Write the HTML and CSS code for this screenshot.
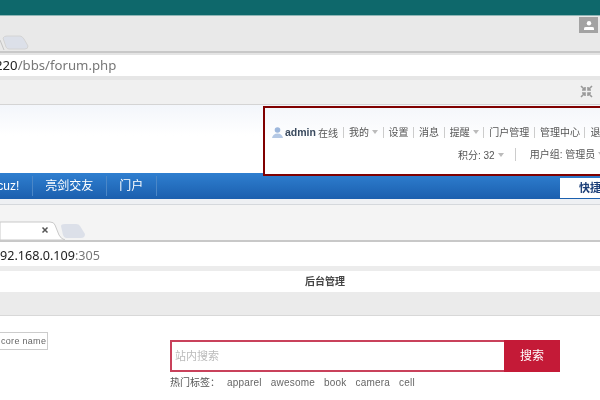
FILE: index.html
```html
<!DOCTYPE html>
<html lang="zh-CN">
<head>
  <meta charset="UTF-8">
  <title>后台管理</title>
  <link rel="stylesheet" href="styles.css">
</head>
<body>
  <div class="topbar"></div>

  <div class="tabstrip first">
    <svg class="newtab" width="30" height="16" viewBox="0 0 30 16">
      <path d="M0 5L4 15" stroke="#c4c4c4" fill="none"/>
      <path d="M3 3Q4 1 7 1H20Q22 1 24 4L28 11Q28 14 25 14H9Q7 14 6 12Z" fill="#dce0e9" stroke="#d4d4d4"/>
    </svg>
    <div class="user-btn">
      <svg width="10" height="9" viewBox="0 0 10 9"><circle cx="5" cy="2.2" r="2.2" fill="#fff"/><path d="M0 9V7.4Q0 6 2 6H8Q10 6 10 7.4V9Z" fill="#fff"/></svg>
    </div>
  </div>
  <div class="urlbar upper"><span class="host">220</span><span class="path">/bbs/forum.php</span></div>
  <div class="toolbar">
    <svg class="shrink" width="13" height="13" viewBox="0 0 13 13" fill="none" stroke="#9a9a9a" stroke-width="1.6">
      <path d="M1 1L5 5M5 2V5H2M12 1L8 5M8 2V5H11M1 12L5 8M5 11V8H2M12 12L8 8M8 11V8H11"/>
    </svg>
  </div>

  <div class="site-head">
    <div class="userbox">
      <div class="info-row">
        <svg class="avatar" width="11" height="11" viewBox="0 0 11 11"><circle cx="5.5" cy="3" r="2.8" fill="#9db7dc"/><path d="M0 11Q1 6.500 5.500 6.500T11 11Z" fill="#b4c8e4"/></svg>
        <b class="name">admin</b><span class="online">在线</span>
        <a>我的<i class="caret"></i></a>
        <a>设置</a>
        <a>消息</a>
        <a>提醒<i class="caret"></i></a>
        <a>门户管理</a>
        <a>管理中心</a>
        <a>退出</a>
      </div>
      <div class="info-row second">
        <span>积分: 32<i class="caret"></i></span>
        <span class="group">用户组: 管理员<i class="caret"></i></span>
      </div>
    </div>
  </div>

  <nav class="mainnav">
    <a class="clip">Discuz!</a>
    <a>亮剑交友</a>
    <a>门户</a>
    <div class="quick">快捷导航</div>
  </nav>
  <div class="navgap"></div>

  <div class="tabstrip second">
    <svg class="activetab" width="90" height="20" viewBox="0 0 90 20">
      <path d="M0 1H50Q54 1 55 4L59 14Q61 18 65 19H0Z" fill="#fff" stroke="#c9c9c9"/>
      <path d="M42.500 6.500L47.500 11.500M47.500 6.500L42.500 11.500" stroke="#555" stroke-width="1.500"/>
      <path d="M61 5Q61 3 65 3H76Q79 3 80 5L85 13Q85 17 81 17H66Q64 17 63 14Z" fill="#dce0e9"/>
    </svg>
  </div>
  <div class="urlbar lower"><span class="host">92.168.0.109</span><span class="path">:305</span></div>
  <div class="bookmarks">后台管理</div>
  <div class="graybar"></div>

  <main class="shop">
    <div class="storename">core name</div>
    <div class="searchcol">
      <form class="search">
        <div class="keyword">站内搜索</div>
        <div class="submit">搜索</div>
      </form>
      <div class="hot">
        <span class="hot-label">热门标签：</span>
        <a>apparel</a><a>awesome</a><a>book</a><a>camera</a><a>cell</a>
      </div>
    </div>
  </main>
</body>
</html>
```

FILE: styles.css
```css
html,body{ margin:0; padding:0; }
body{ width:600px; height:400px; overflow:hidden; background:#fff; color:#555;
  font-family:"Liberation Sans","Noto Sans CJK SC",sans-serif; font-size:10px; filter:blur(.35px); }
a{ text-decoration:none; }
i{ font-style:normal; }

.topbar{ height:16px; background:#0e686b; border-bottom:1px solid #8fb6b6; box-sizing:border-box; }

.tabstrip{ display:flex; justify-content:space-between; background:#e9e9e9; box-sizing:border-box;
  border-bottom:2px solid #c8c8c8; }
.tabstrip.first{ height:37px; padding-right:2px; }
.newtab{ align-self:flex-end; }
.user-btn{ width:19px; height:16px; background:#a3a3a3; display:flex; align-items:center; justify-content:center; margin-top:1px; }

.urlbar{ height:27px; box-sizing:border-box; background:#fff; overflow:hidden; white-space:nowrap;
  border-top:2px solid #e4e4e4; border-bottom:4px solid #e6e6e6;
  font-family:"Noto Sans",sans-serif; line-height:20px; }
.urlbar.upper{ font-size:13.200px; text-indent:-5px; }
.urlbar .host{ color:#222; }
.urlbar .path{ color:#777; }
.toolbar{ height:25px; box-sizing:border-box; background:#f0f0f0; border-bottom:1px solid #d4d4d4;
  display:flex; justify-content:flex-end; align-items:center; padding:0 7px 1px 0; }

.site-head{ height:68px; position:relative; background:linear-gradient(#f3f6fb,#fff 45%); }
.userbox{ position:absolute; left:263px; top:1px; width:340px; height:70px; box-sizing:border-box;
  border:2px solid #800000; background:linear-gradient(#f5f7fb,#fff 50%); padding:16px 0 0 7px; z-index:2; }
.info-row{ display:flex; align-items:center; height:16px; white-space:nowrap; }
.info-row.second{ margin-top:6px; padding-left:186px; }
.avatar{ margin-right:2px; flex-shrink:0; }
.name{ color:#3a4a5e; font-size:10.500px; margin-right:2px; }
.online{ margin-right:5px; }
.info-row a{ color:#555; border-left:1px solid #ccc; padding:0 4.600px 0 5px; line-height:11px; }
.caret{ display:inline-block; border:3px solid transparent; border-top:4px solid #bbb; border-bottom:0; margin-left:3px; vertical-align:2px; }
.group{ margin-left:11px; padding-left:14px; border-left:1px solid #ccc; line-height:13px; }

.mainnav{ height:26px; display:flex; align-items:center; background:linear-gradient(#2f7fd0,#1b5fae);
  color:#fff; font-size:12px; overflow:hidden; }
.mainnav a{ color:#fff; height:20px; line-height:20px; padding:0 13px 0 12px; border-right:1px solid #4b87c7; }
.mainnav a.clip{ margin-left:-20px; padding-left:0; padding-right:13px; }
.quick{ margin-left:auto; width:60px; height:20px; margin-top:4px; margin-right:-20px; padding-left:19px; box-sizing:border-box; background:#fff;
  color:#1c3f78; font-size:11px; font-weight:bold; line-height:20px; white-space:nowrap; overflow:hidden; }
.navgap{ height:6px; background:#eef0f3; border-bottom:1px solid #d5d8dc; box-sizing:border-box; }

.tabstrip.second{ height:37px; background:#f4f4f4; }
.activetab{ display:block; align-self:flex-end; margin-bottom:-1px; }
.urlbar.lower{ height:29px; border-top:0; border-bottom:5px solid #ececec; line-height:28px; font-size:12.600px; }
.bookmarks{ height:21px; line-height:22px; padding-left:305px; font-weight:bold; color:#444; }
.graybar{ height:24px; background:#ebebeb; border-bottom:1px solid #d8d8d8; box-sizing:border-box; }

.shop{ display:flex; align-items:flex-start; padding-top:16px; }
.storename{ width:58px; height:18px; margin-left:-10px; margin-right:122px; box-sizing:border-box; border:1px solid #ccc;
  padding-left:10px; line-height:16px; font-size:9px; letter-spacing:.3px; color:#666; white-space:nowrap; overflow:hidden; }
.searchcol{ margin-top:8px; width:390px; }
.search{ display:flex; height:32px; margin:0; }
.keyword{ width:334px; box-sizing:border-box; border:2px solid #c9415b; border-right:0; padding-left:3px;
  color:#bbb; font-size:11px; line-height:29px; }
.submit{ width:56px; background:#c41a37; color:#fff; font-size:12px; text-align:center; line-height:32px; }
.hot{ display:flex; margin-top:4px; line-height:14px; letter-spacing:.2px; color:#666; }
.hot-label{ width:57px; letter-spacing:0; color:#555; }
.hot a{ margin-right:9px; }
```
